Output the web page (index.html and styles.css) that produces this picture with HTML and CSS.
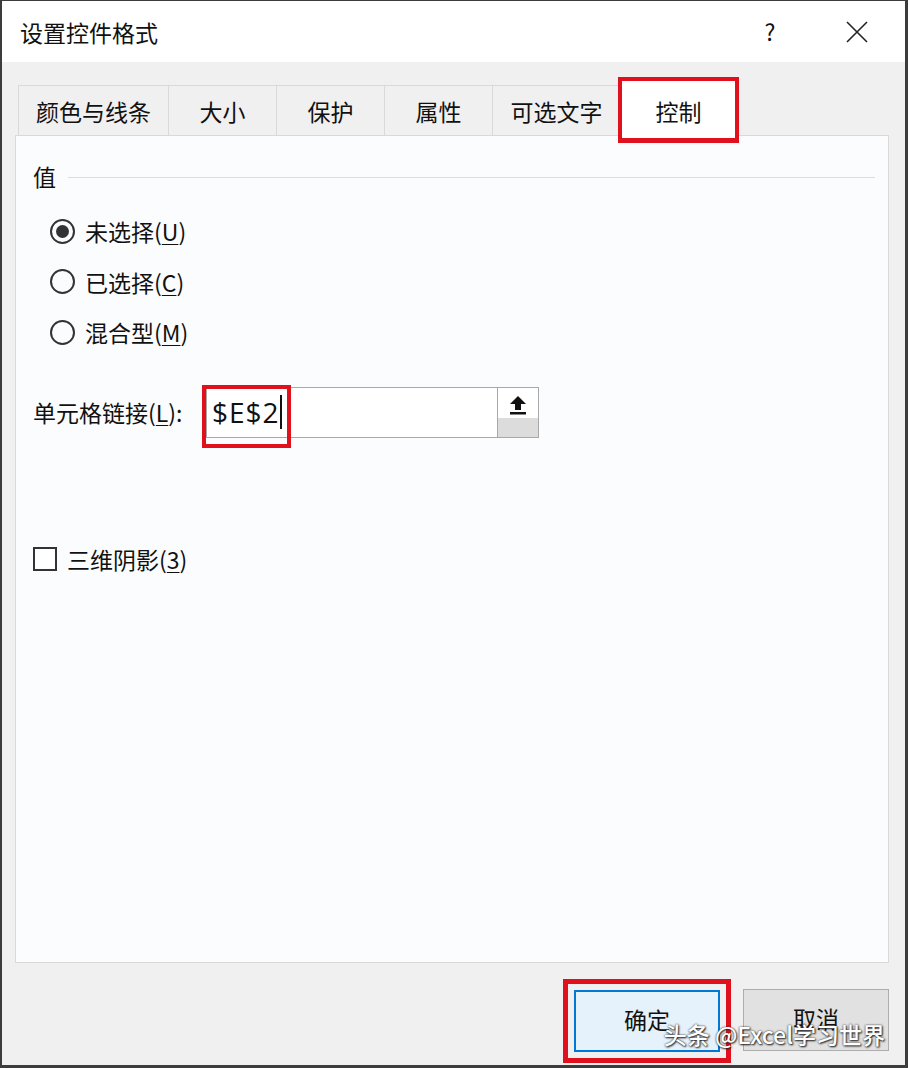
FILE: index.html
```html
<!DOCTYPE html>
<html>
<head>
    <meta charset="UTF-8">
    <title>设置控件格式</title>
    <link rel="stylesheet" href="styles.css">
</head>
<body>
    <div class="window">
        <header class="titlebar">
            <span class="title">设置控件格式</span>
            <span class="help">?</span>
            <span class="close">
                <svg width="22" height="22" viewBox="0 0 22 22"><path d="M1 1 L21 21 M21 1 L1 21" stroke="#222" stroke-width="1.6" fill="none"/></svg>
            </span>
        </header>

        <div class="body">
            <nav class="tabs">
                <div class="tab">颜色与线条</div>
                <div class="tab w-sm">大小</div>
                <div class="tab w-sm">保护</div>
                <div class="tab w-sm">属性</div>
                <div class="tab w-md">可选文字</div>
                <div class="tab active">控制</div>
            </nav>

            <section class="panel">
                <div class="group-title">
                    <span>值</span>
                    <div class="rule"></div>
                </div>

                <div class="radios">
                    <div class="radio-row"><span class="radio checked"></span><span>未选择(<u>U</u>)</span></div>
                    <div class="radio-row"><span class="radio"></span><span>已选择(<u>C</u>)</span></div>
                    <div class="radio-row"><span class="radio"></span><span>混合型(<u>M</u>)</span></div>
                </div>

                <div class="link-row">
                    <label>单元格链接(<u>L</u>):</label>
                    <div class="ref-input">
                        <span class="ref-value">$E$2<span class="caret"></span></span>
                        <span class="ref-btn">
                            <svg width="22" height="22" viewBox="0 0 22 22"><path d="M11 2 L3 10 H8 V16 H14 V10 H19 Z" fill="#111"/><rect x="3" y="18" width="16" height="2.5" fill="#111"/></svg>
                        </span>
                    </div>
                </div>

                <div class="check-row">
                    <span class="checkbox"></span>
                    <span>三维阴影(<u>3</u>)</span>
                </div>
            </section>

            <footer class="buttons">
                <div class="hl-ok"><button class="btn primary">确定</button></div>
                <button class="btn">取消</button>
                <span class="watermark">头条 @Excel学习世界</span>
            </footer>
        </div>
    </div>
</body>
</html>
```

FILE: styles.css
```css
* { box-sizing: border-box; }
html, body { margin: 0; height: 100%; }
body { font-family: "Noto Sans CJK SC", "Noto Sans", sans-serif; color: #111; background: #3a3a3a; }
u { text-decoration-thickness: 1px; text-underline-offset: 3px; }

.window { height: 1068px; border: 2px solid #3c3c3c; border-right-width: 3px; border-bottom-width: 3px; border-top-width: 1px; display: flex; flex-direction: column; background: #f0f0f0; }

.titlebar { height: 61px; background: #fff; display: flex; align-items: center; padding: 0 0 0 18px; }
.title { font-size: 23px; flex: 1; }
.help { font-size: 23px; width: 90px; text-align: center; margin-top: -2px; }
.close { width: 90px; display: flex; justify-content: center; padding-right: 6px; }

.body { flex: 1; display: flex; flex-direction: column; padding: 0 16px 0 13px; position: relative; }

.tabs { display: flex; align-items: flex-end; height: 73px; padding-left: 3px; }
.tab { height: 50px; width: 150px; border: 1px solid #d9d9d9; border-bottom: none; border-right: none; background: #f0f0f0; font-size: 23px; display: flex; align-items: center; justify-content: center; }
.tab.w-sm { width: 108px; }
.tab.w-md { width: 128px; }
.tab.active { height: 66px; width: 121px; margin-left: -2px; background: #fff; border: 4px solid #e0101c; border-bottom-width: 5px; margin-bottom: -8px; position: relative; z-index: 2; padding-top: 2px; }

.panel { height: 828px; background: #fbfcfd; border: 1px solid #d9d9d9; padding: 23px 0 0 17px; }

.group-title { display: flex; align-items: center; font-size: 23px; padding-right: 13px; }
.group-title .rule { flex: 1; height: 1px; background: #d5dde6; margin-left: 12px; margin-top: 2px; }

.radios { padding: 13px 0 0 17px; display: flex; flex-direction: column; }
.radio-row { display: flex; align-items: center; height: 50.5px; font-size: 23px; gap: 10px; }
.radio { width: 25px; height: 25px; border: 2px solid #333; border-radius: 50%; display: flex; align-items: center; justify-content: center; }
.radio.checked::after { content: ""; width: 13px; height: 13px; border-radius: 50%; background: #333; }

.link-row { display: flex; align-items: center; margin-top: 29px; font-size: 23px; }
.link-row label { width: 173px; }
.ref-input { width: 333px; height: 51px; border: 1px solid #a8a8a8; background: #fff; display: flex; position: relative; }
.ref-value { flex: 1; display: flex; align-items: center; padding-left: 5px; font-family: "Open Sans", sans-serif; font-size: 28px; letter-spacing: 1px; position: relative; }
.ref-value::before { content: ""; position: absolute; left: -5px; top: -3px; width: 81px; height: 55px; border: 4px solid #e0101c; }
.caret { width: 2px; height: 34px; background: #111; margin-left: 0; }
.ref-btn { width: 41px; border-left: 1px solid #a8a8a8; background: linear-gradient(#fff 0, #fff 62%, #dcdcdc 62%, #dcdcdc 100%); display: flex; justify-content: center; padding-top: 6px; }

.check-row { display: flex; align-items: center; gap: 10px; margin-top: 104px; font-size: 23px; }
.checkbox { width: 24px; height: 24px; border: 2px solid #333; background: #fff; }

.buttons { flex: 1; display: flex; justify-content: flex-end; align-items: flex-start; padding-top: 16px; gap: 12px; position: relative; }
.hl-ok { border: 5px solid #e0101c; padding: 6px 6px; }
.btn { width: 146px; height: 62px; font-family: inherit; font-size: 23px; border: 1px solid #adadad; background: #e1e1e1; color: #111; margin-top: 10px; padding-bottom: 6px; }
.hl-ok .btn { margin-top: 0; border: 2px solid #0078d7; background: #e5f1fb; width: 146px; }
.watermark { position: absolute; right: 4px; bottom: 14px; color: #fff; font-size: 23px; font-weight: 500; text-shadow: 0 0 2px #222, 1px 1px 2px #222; }
```
